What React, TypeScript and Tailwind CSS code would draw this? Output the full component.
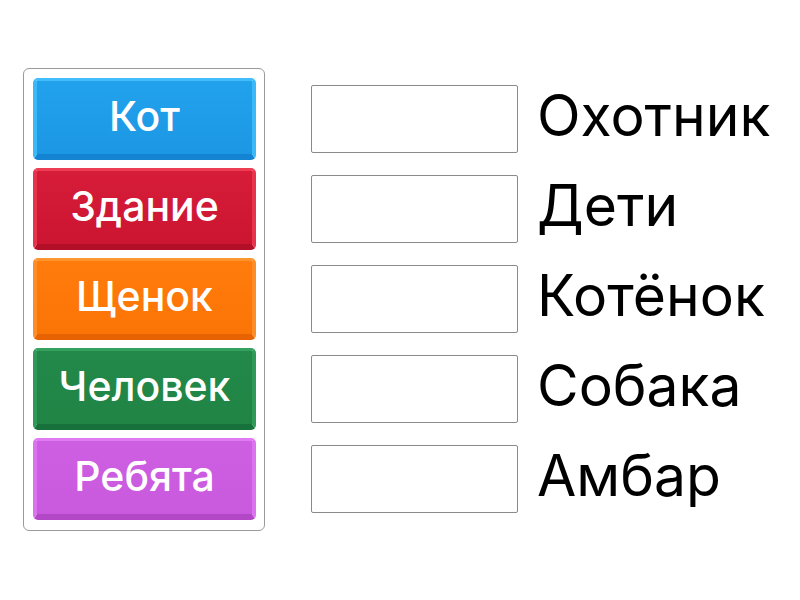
import React from "react";

const tiles = [
  { t: "Кот", face: "bg-[linear-gradient(#22a2ec,#1c97e4)]", rim: "border-x-[#3ab8f8] border-t-[#41bdfb] border-b-[#1483d2]" },
  { t: "Здание", face: "bg-[linear-gradient(#d61c38,#cc1531)]", rim: "border-x-[#e7344c] border-t-[#ec3d53] border-b-[#b30f28]" },
  { t: "Щенок", face: "bg-[linear-gradient(#ff7c0c,#fb7406)]", rim: "border-x-[#ff8d25] border-t-[#ff9530] border-b-[#e76200]" },
  { t: "Человек", face: "bg-[linear-gradient(#23894a,#1f8444)]", rim: "border-x-[#2f9a58] border-t-[#35a15e] border-b-[#17713a]" },
  { t: "Ребята", face: "bg-[linear-gradient(#cf5fe2,#c959dd)]", rim: "border-x-[#dc72ef] border-t-[#e07af2] border-b-[#b348c6]" },
];

const words = ["Охотник", "Дети", "Котёнок", "Собака", "Амбар"];

export default function App() {
  return (
    <div className="w-[800px] h-[600px] bg-white flex items-start pt-[68px] pl-[23px] font-['Inter',sans-serif]">
      <div className="w-[242px] h-[463px] border border-[#9a9a9a] rounded-[6px] pt-[9px] pl-[9px] flex flex-col gap-[8px]">
        {tiles.map((x) => (
          <div
            key={x.t}
            className={`w-[223px] h-[82px] rounded-[5px] border-x-[4px] border-t-[3px] border-b-[6px] ${x.rim} ${x.face} flex items-center justify-center text-white text-[41px] font-medium leading-none`}
          >
            <span className="-mt-[2px]">{x.t}</span>
          </div>
        ))}
      </div>
      <div className="ml-[46px] mt-[17px] flex flex-col gap-[22px]">
        {words.map((w) => (
          <div key={w} className="flex items-center">
            <div className="w-[207px] h-[68px] border border-[#8a8a8a] rounded-[2px] bg-white" />
            <div className="ml-[19px] mb-[8px] text-[57px] leading-none text-black">{w}</div>
          </div>
        ))}
      </div>
    </div>
  );
}
